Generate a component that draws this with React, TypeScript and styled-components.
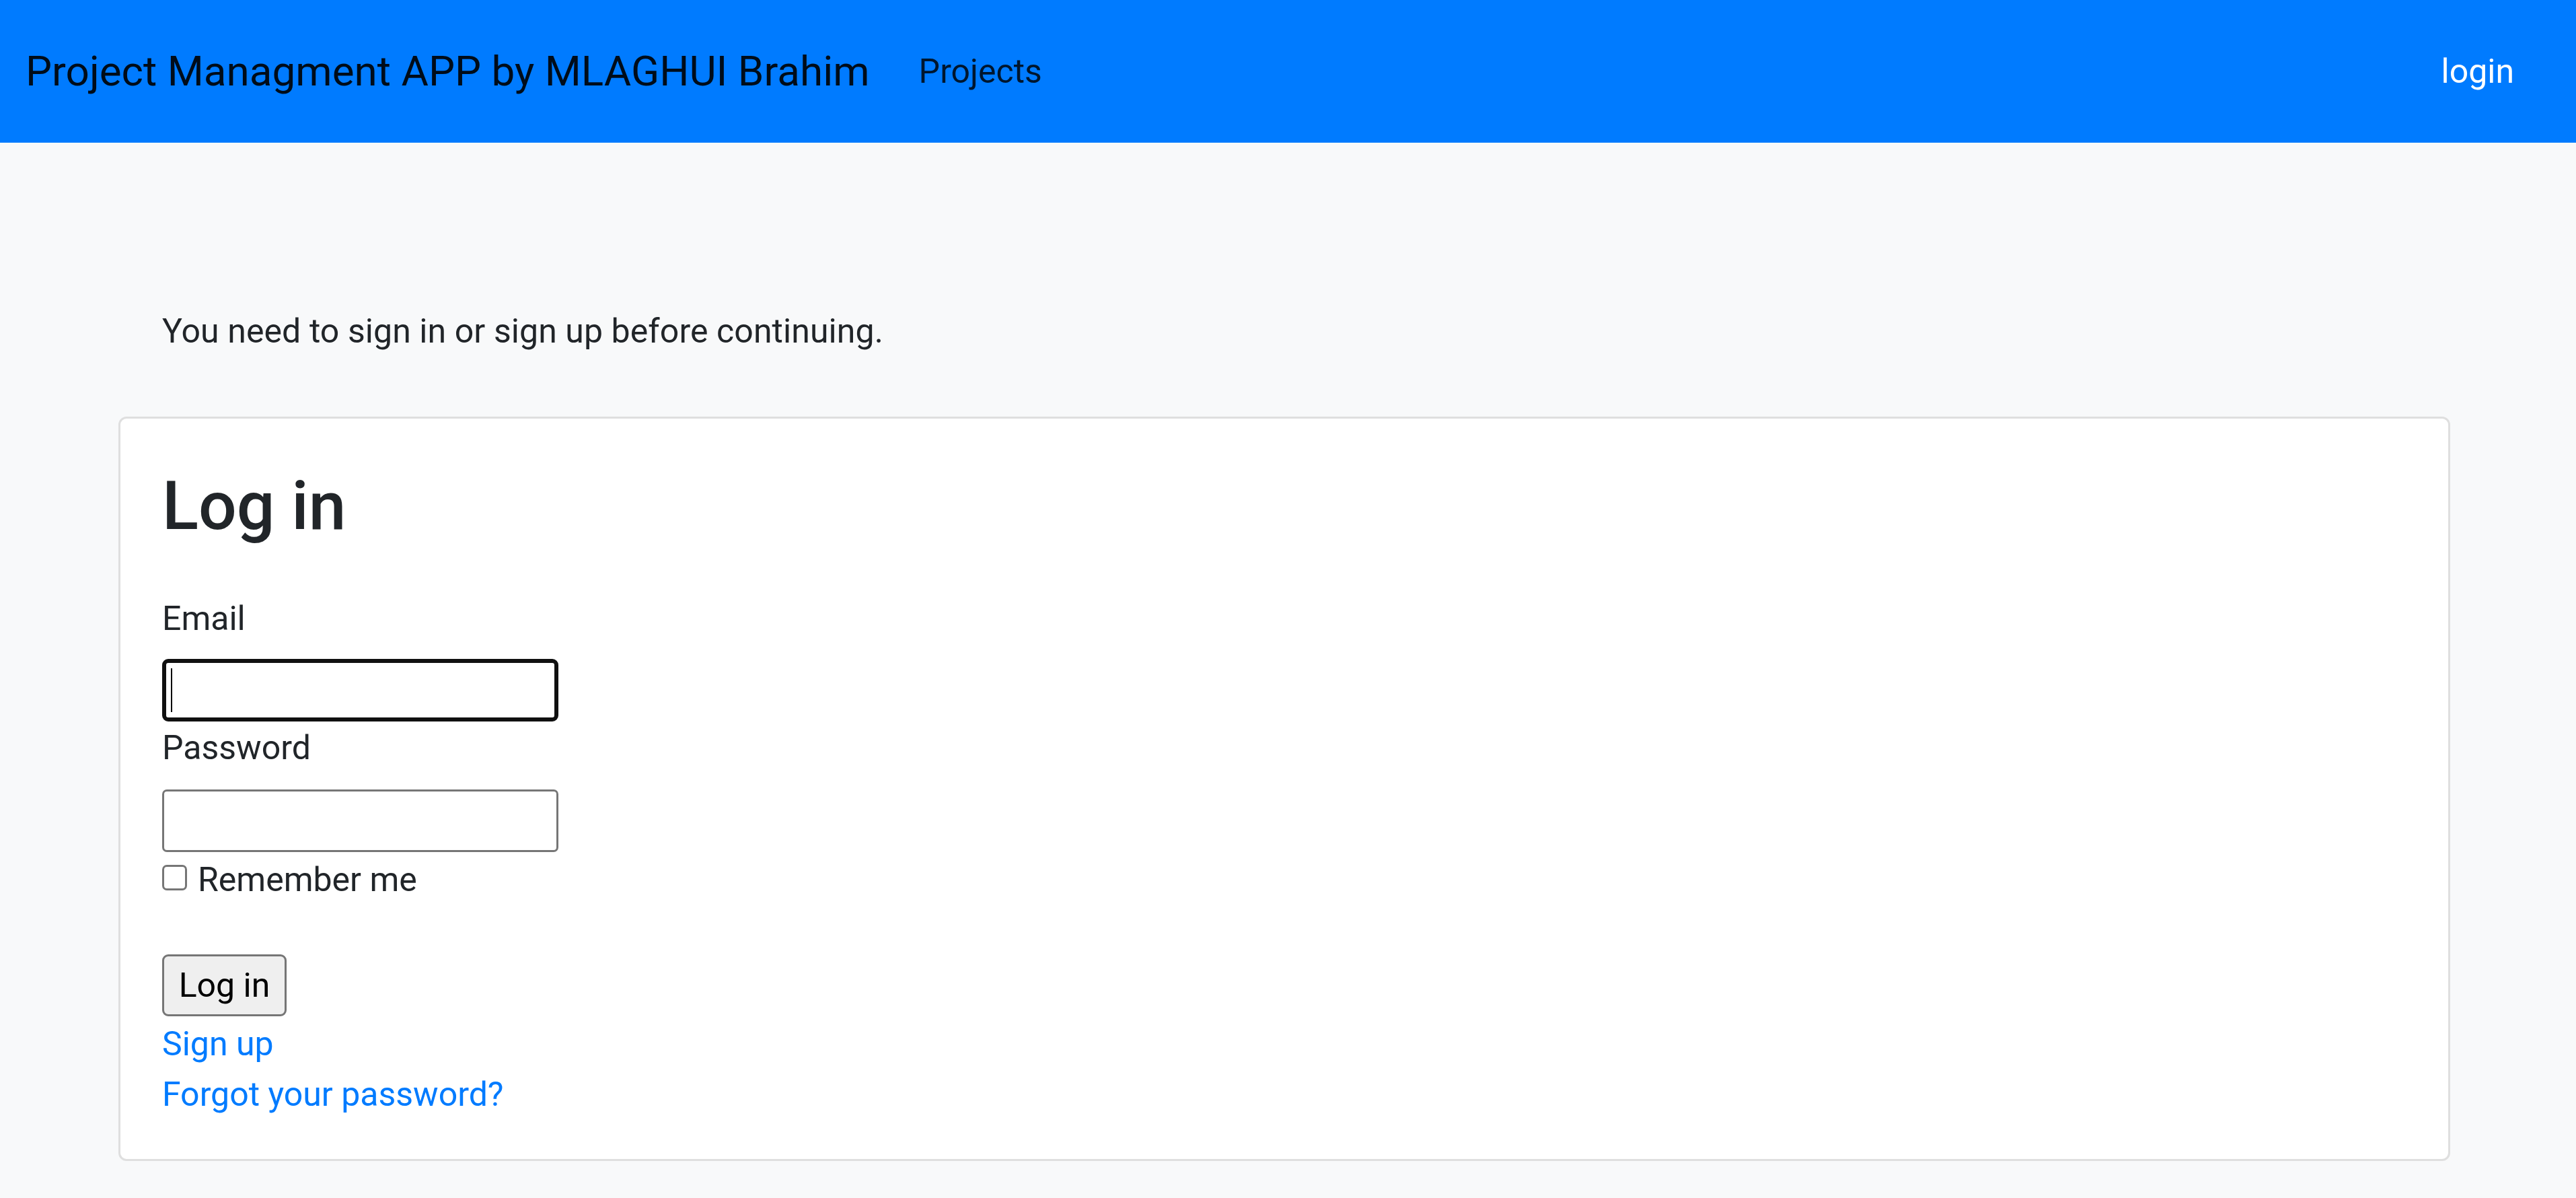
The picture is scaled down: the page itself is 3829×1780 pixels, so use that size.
import React from 'react';
import styled, { createGlobalStyle } from 'styled-components';

const GlobalStyle = createGlobalStyle`
    html, body {
        margin: 0;
        padding: 0;
        background: #f8f9fa;
    }
    body {
        font-family: Roboto, "Segoe UI", "Helvetica Neue", Arial, "Noto Sans", sans-serif;
        font-size: 50px;
        line-height: 75px;
        color: #212529;
        min-height: 1780px;
    }
`;

const Navbar = styled.nav`
    height: 212px;
    background: #007bff;
    display: flex;
    align-items: center;
    padding: 0 67px 0 38px;
    box-sizing: border-box;
`;

const Brand = styled.a`
    font-size: 62px;
    line-height: 94px;
    color: rgba(0, 0, 0, 0.9);
    text-decoration: none;
    margin-right: 48px;
`;

const NavLink = styled.a<{ $light?: boolean }>`
    font-size: 50px;
    line-height: 75px;
    padding: 0 25px;
    text-decoration: none;
    color: ${p => (p.$light ? '#ffffff' : 'rgba(0, 0, 0, 0.82)')};
`;

const Spacer = styled.div`
    flex: 1;
`;

const Main = styled.main`
    width: 3466px;
    margin-left: 176px;
    padding-top: 243px;
`;

const Notice = styled.p`
    margin: 0 0 89px;
    padding: 0 65px;
    letter-spacing: 0.08px;
`;

const Card = styled.section`
    background: #ffffff;
    border: 3px solid #dfdfdf;
    border-radius: 12px;
    padding: 63px 63px 58px 62px;
`;

const Heading = styled.h2`
    margin: 7px 0 0;
    font-size: 100px;
    line-height: 120px;
    font-weight: 500;
    color: #212529;
`;

const Label = styled.label<{ $top: number }>`
    display: block;
    margin-top: ${p => p.$top}px;
`;

const FieldBox = styled.div<{ $top: number }>`
    position: relative;
    width: 589px;
    height: 93px;
    margin-top: ${p => p.$top}px;
`;

const TextInput = styled.input<{ $focused?: boolean }>`
    box-sizing: border-box;
    width: 100%;
    height: 100%;
    margin: 0;
    padding: 0 12px;
    font: inherit;
    background: #ffffff;
    outline: none;
    border: ${p => (p.$focused ? '6px solid #101010' : '3px solid #767676')};
    border-radius: ${p => (p.$focused ? '9px' : '7px')};
`;

const Caret = styled.span`
    position: absolute;
    left: 13px;
    top: 14px;
    width: 2px;
    height: 65px;
    background: #000000;
`;

const CheckRow = styled.div`
    display: flex;
    align-items: flex-start;
    margin-top: 4px;
    height: 75px;
`;

const CheckBox = styled.input`
    appearance: none;
    box-sizing: border-box;
    width: 37px;
    height: 38px;
    margin: 15px 16px 0 0;
    border: 3px solid #767676;
    border-radius: 7px;
    background: #ffffff;
`;

const SubmitButton = styled.button`
    display: block;
    box-sizing: border-box;
    width: 185px;
    height: 92px;
    margin-top: 73px;
    padding: 0;
    font: inherit;
    color: #000000;
    background: #efefef;
    border: 3px solid #767676;
    border-radius: 9px;
`;

const Links = styled.div`
    display: flex;
    flex-direction: column;
    align-items: flex-start;
    margin-top: 4px;
`;

const TextLink = styled.a`
    color: #007bff;
    text-decoration: none;
`;

const App = () => (
    <>
        <GlobalStyle />
        <Navbar>
            <Brand href="#">Project Managment APP by MLAGHUI Brahim</Brand>
            <NavLink href="#">Projects</NavLink>
            <Spacer />
            <NavLink href="#" $light>
                login
            </NavLink>
        </Navbar>
        <Main>
            <Notice>You need to sign in or sign up before continuing.</Notice>
            <Card>
                <Heading>Log in</Heading>
                <form onSubmit={e => e.preventDefault()}>
                    <Label $top={70} htmlFor="user_email">
                        Email
                    </Label>
                    <FieldBox $top={22}>
                        <TextInput id="user_email" type="email" $focused />
                        <Caret />
                    </FieldBox>
                    <Label $top={2} htmlFor="user_password">
                        Password
                    </Label>
                    <FieldBox $top={24}>
                        <TextInput id="user_password" type="password" />
                    </FieldBox>
                    <CheckRow>
                        <CheckBox type="checkbox" id="user_remember_me" />
                        <label htmlFor="user_remember_me">Remember me</label>
                    </CheckRow>
                    <SubmitButton type="submit">Log in</SubmitButton>
                </form>
                <Links>
                    <TextLink href="#">Sign up</TextLink>
                    <TextLink href="#">Forgot your password?</TextLink>
                </Links>
            </Card>
        </Main>
    </>
);

export default App;
